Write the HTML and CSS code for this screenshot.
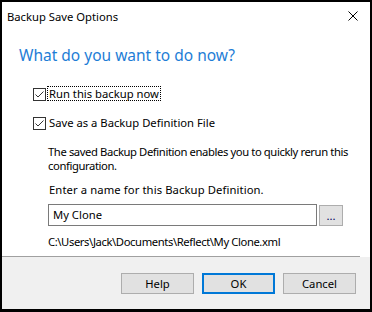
FILE: index.html
```html
<!DOCTYPE html>
<html lang="en">
<head>
    <meta charset="UTF-8">
    <title>Backup Save Options</title>
    <link rel="stylesheet" href="styles.css">
</head>
<body>

    <div class="window">

        <!-- Title bar -->
        <div class="titlebar">
            <span class="title">Backup Save Options</span>
            <svg class="close" width="10" height="10" viewBox="0 0 10 10">
                <path d="M0.5 0.5 L9.5 9.5 M9.5 0.5 L0.5 9.5" stroke="#000" stroke-width="1" fill="none"/>
            </svg>
        </div>

        <!-- Main area -->
        <div class="content">
            <h1 class="instruction">What do you want to do now?</h1>

            <div class="check-row first">
                <svg class="checkbox" width="13" height="13" viewBox="0 0 13 13">
                    <rect x="0.5" y="0.5" width="12" height="12" fill="#fff" stroke="#333"/>
                    <path d="M2.5 6.5 L5 9 L10.5 3.5" stroke="#333" stroke-width="1" fill="none"/>
                </svg>
                <span class="check-label focused">Run this backup now</span>
            </div>

            <div class="check-row">
                <svg class="checkbox" width="13" height="13" viewBox="0 0 13 13">
                    <rect x="0.5" y="0.5" width="12" height="12" fill="#fff" stroke="#333"/>
                    <path d="M2.5 6.5 L5 9 L10.5 3.5" stroke="#333" stroke-width="1" fill="none"/>
                </svg>
                <span class="check-label">Save as a Backup Definition File</span>
            </div>

            <div class="details">
                <p class="note">The saved Backup Definition enables you to quickly rerun this<br>configuration.</p>
                <p class="prompt">Enter a name for this Backup Definition.</p>

                <div class="name-row">
                    <div class="name-input">My Clone</div>
                    <div class="browse">...</div>
                </div>

                <p class="path">C:\Users\Jack\Documents\Reflect\My Clone.xml</p>
            </div>

            <div class="separator"></div>
        </div>

        <!-- Buttons -->
        <div class="footer">
            <div class="btn">Help</div>
            <div class="btn default">OK</div>
            <div class="btn">Cancel</div>
        </div>

    </div>

</body>
</html>
```

FILE: styles.css
```css
body {
    margin: 0;
    padding: 0;
    background: #fff;
    font-family: "Noto Sans", "Open Sans", sans-serif;
    font-size: 11.25px;
    color: #000;
}

.window {
    box-sizing: border-box;
    width: 372px;
    height: 312px;
    border: 2px solid #000;
    border-bottom-width: 3px;
    background: #fff;
    display: flex;
    flex-direction: column;
}

.titlebar {
    height: 31px;
    display: flex;
    align-items: center;
    justify-content: space-between;
    padding-left: 5px;
    background: #fff;
}

.title {
    line-height: 13px;
    margin-top: -3px;
}

.close {
    margin-right: 12px;
    margin-top: -3px;
}

.content {
    background: #fff;
}

.instruction {
    margin: 12px 0 0 17px;
    font-size: 15.5px;
    font-weight: normal;
    line-height: 20px;
    color: #1e7dd6;
}

.check-row {
    display: flex;
    align-items: center;
    height: 13px;
    margin: 16px 0 0 31px;
}

.check-row.first {
    margin-top: 23px;
}

.checkbox {
    flex: none;
}

.check-label {
    margin-left: 2px;
    padding: 0 1px;
    line-height: 13px;
    margin-top: -2px;
}

.check-label.focused {
    outline: 1px dotted #000;
    outline-offset: 0;
}

.details {
    padding-left: 46px;
}

.note {
    margin: 15px 0 0 0;
    line-height: 14px;
    letter-spacing: -0.4px;
    white-space: nowrap;
}

.prompt {
    margin: 10px 0 0 1px;
    line-height: 13px;
    letter-spacing: 0.1px;
}

.name-row {
    display: flex;
    gap: 2px;
    margin-top: 8px;
}

.name-input {
    box-sizing: border-box;
    width: 269px;
    height: 22px;
    border: 1px solid #7a7a7a;
    padding-left: 4px;
    line-height: 19px;
}

.browse {
    box-sizing: border-box;
    width: 24px;
    height: 21px;
    margin-top: 1px;
    background: #e1e1e1;
    border: 1px solid #adadad;
    text-align: center;
    line-height: 19px;
    color: #000060;
}

.path {
    margin: 9px 0 0 0;
    line-height: 13px;
    letter-spacing: -0.4px;
}

.separator {
    height: 1px;
    margin: 8px 10px 0 0;
    background: #a0a0a0;
}

.footer {
    flex: 1;
    background: #f0f0f0;
    display: flex;
    justify-content: flex-end;
    gap: 8px;
    padding: 16px 14px 0 0;
}

.btn {
    box-sizing: border-box;
    width: 73px;
    height: 21px;
    background: #e1e1e1;
    border: 1px solid #adadad;
    text-align: center;
    line-height: 19px;
}

.btn.default {
    border: 2px solid #0078d7;
    line-height: 17px;
}
```
